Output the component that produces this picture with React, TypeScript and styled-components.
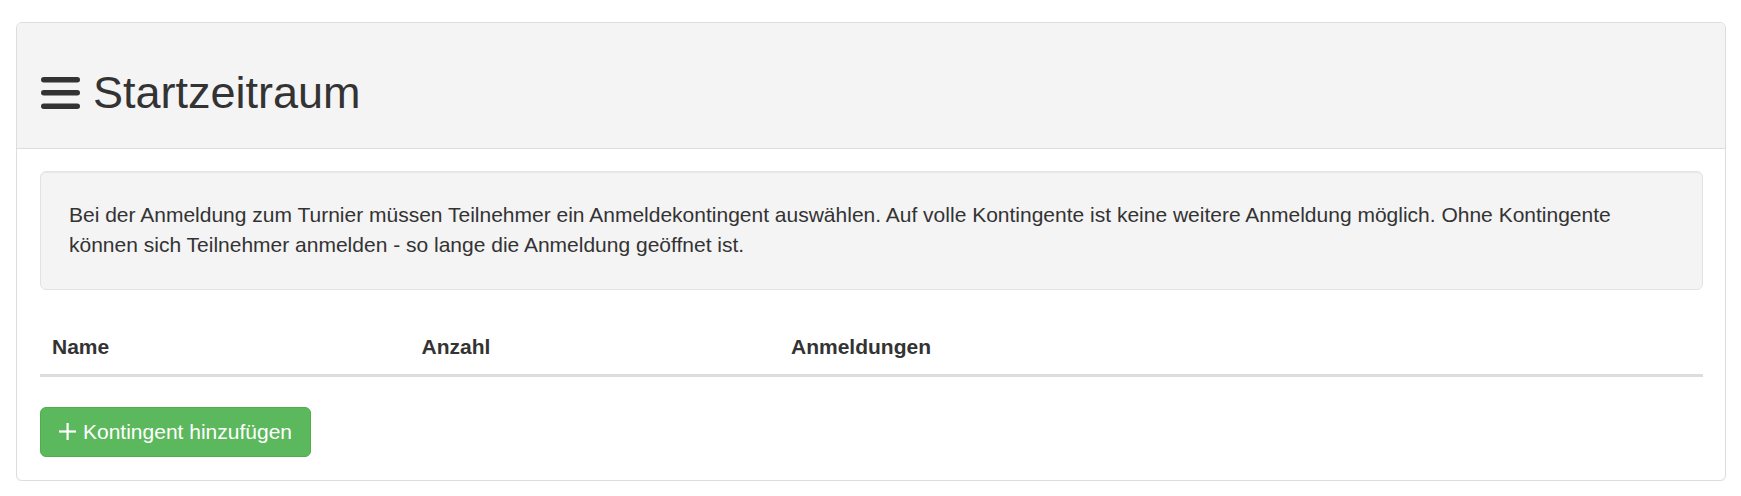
import React from "react";
import styled, { createGlobalStyle } from "styled-components";

const GlobalStyle = createGlobalStyle`
  html, body {
    margin: 0;
    padding: 0;
    background: #fff;
  }
  body {
    font-family: "Liberation Sans", Arial, Helvetica, sans-serif;
    font-size: 21px;
    line-height: 30px;
    color: #333;
  }
`;

const Page = styled.div`
  padding: 22px 15px 0 16px;
`;

const Panel = styled.section`
  border: 1px solid #ddd;
  border-radius: 6px;
  background: #fff;
  box-shadow: 0 1px 1px rgba(0, 0, 0, 0.05);
  overflow: hidden;
`;

const PanelHeading = styled.header`
  background: #f4f4f4;
  border-bottom: 1px solid #ddd;
  padding: 15px 24px;
`;

const Title = styled.h2`
  margin: 30px 0 15px;
  font-size: 45px;
  font-weight: 400;
  line-height: 49.5px;
  color: #333;
  display: flex;
  align-items: center;
  gap: 13px;
`;

const PanelBody = styled.div`
  padding: 22px 22px 23px 23px;
`;

const Well = styled.div`
  background: #f4f4f4;
  border: 1px solid #e3e3e3;
  border-radius: 6px;
  box-shadow: inset 0 1px 1px rgba(0, 0, 0, 0.05);
  padding: 28px 28px 29px;
  margin-bottom: 30px;

  p {
    margin: 0;
  }
`;

const Table = styled.div`
  margin-bottom: 30px;
`;

const HeadRow = styled.div`
  display: grid;
  grid-template-columns: 369.5px 369.5px 1fr;
  border-bottom: 3px solid #ddd;
`;

const HeadCell = styled.div`
  padding: 12px;
  font-weight: 700;
  color: #333;
`;

const Button = styled.button`
  display: inline-flex;
  align-items: center;
  gap: 7px;
  height: 50px;
  padding: 0 18px;
  font-family: inherit;
  font-size: 21px;
  line-height: 30px;
  color: #fff;
  background: #5cb85c;
  border: 1px solid #4cae4c;
  border-radius: 6px;
  cursor: pointer;
`;

function BarsIcon() {
  return (
    <svg width="39" height="34" viewBox="0 0 39 34" aria-hidden="true">
      <rect x="0" y="1" width="39" height="5.5" rx="2.75" fill="#333" />
      <rect x="0" y="14" width="39" height="5.5" rx="2.75" fill="#333" />
      <rect x="0" y="27.5" width="39" height="5.5" rx="2.75" fill="#333" />
    </svg>
  );
}

function PlusIcon() {
  return (
    <svg width="17" height="17" viewBox="0 0 17 17" aria-hidden="true">
      <rect x="7.5" y="0" width="2.2" height="17" fill="#fff" />
      <rect x="0" y="7.4" width="17" height="2.2" fill="#fff" />
    </svg>
  );
}

export default function App() {
  return (
    <Page>
      <GlobalStyle />
      <Panel>
        <PanelHeading>
          <Title>
            <BarsIcon />
            Startzeitraum
          </Title>
        </PanelHeading>
        <PanelBody>
          <Well>
            <p>
              Bei der Anmeldung zum Turnier müssen Teilnehmer ein Anmeldekontingent
              auswählen. Auf volle Kontingente ist keine weitere Anmeldung möglich.
              Ohne Kontingente können sich Teilnehmer anmelden - so lange die
              Anmeldung geöffnet ist.
            </p>
          </Well>
          <Table>
            <HeadRow>
              <HeadCell>Name</HeadCell>
              <HeadCell>Anzahl</HeadCell>
              <HeadCell>Anmeldungen</HeadCell>
            </HeadRow>
          </Table>
          <Button type="button">
            <PlusIcon />
            Kontingent hinzufügen
          </Button>
        </PanelBody>
      </Panel>
    </Page>
  );
}
